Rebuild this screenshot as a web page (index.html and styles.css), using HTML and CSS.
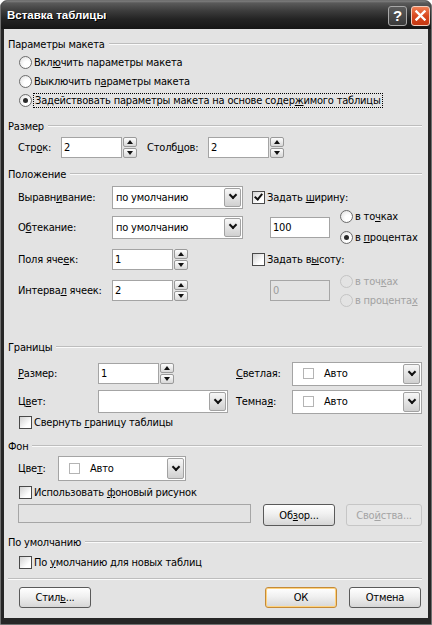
FILE: index.html
```html
<!DOCTYPE html>
<html lang="ru">
<head>
    <meta charset="UTF-8">
    <title>Вставка таблицы</title>
    <link rel="stylesheet" href="styles.css">
</head>
<body>
    <div class="window">
        <div class="titlebar">
            <span class="title">Вставка таблицы</span>
            <span class="cap-btn help">?</span>
            <span class="cap-btn close">
                <svg width="11" height="11" viewBox="0 0 11 11"><path d="M1.5 1.5l8 8M9.5 1.5l-8 8" stroke="#fff" stroke-width="2.4" stroke-linecap="square"/></svg>
            </span>
        </div>

        <div class="client">
            <!-- Параметры макета -->
            <div class="group-title first">Параметры макета</div>
            <div class="radio-list">
                <div class="opt"><span class="radio"></span><span>Вкл<u>ю</u>чить параметры макета</span></div>
                <div class="opt"><span class="radio"></span><span>Выключить п<u>а</u>раметры макета</span></div>
                <div class="opt"><span class="radio checked"></span><span class="focus">Задействовать параметры макета на основе содер<u>ж</u>имого таблицы</span></div>
            </div>

            <!-- Размер -->
            <div class="group-title">Размер</div>
            <div class="size-row">
                <span class="lbl-rows">Стр<u>о</u>к:</span>
                <span class="field w61">2</span>
                <span class="spin"><span class="spin-btn up"></span><span class="spin-btn down"></span></span>
                <span class="lbl-cols">Столб<u>ц</u>ов:</span>
                <span class="field w61">2</span>
                <span class="spin"><span class="spin-btn up"></span><span class="spin-btn down"></span></span>
            </div>

            <!-- Положение -->
            <div class="group-title">Положение</div>
            <div class="pos-grid">
                <span>Выравн<u>и</u>вание:</span>
                <span class="combo"><span class="combo-text">по умолчанию</span><span class="combo-btn"></span></span>
                <div class="opt side"><span class="check checked"></span><span>Задать <u>ш</u>ирину:</span></div>

                <span>О<u>б</u>текание:</span>
                <span class="combo"><span class="combo-text">по умолчанию</span><span class="combo-btn"></span></span>
                <div class="unit-row side">
                    <span class="field w60">100</span>
                    <div class="unit-stack">
                        <div class="opt"><span class="radio"></span><span>в то<u>ч</u>ках</span></div>
                        <div class="opt"><span class="radio checked"></span><span>в <u>п</u>роцентах</span></div>
                    </div>
                </div>

                <span>Поля яче<u>е</u>к:</span>
                <span class="spin-field"><span class="field w61">1</span><span class="spin"><span class="spin-btn up"></span><span class="spin-btn down"></span></span></span>
                <div class="opt side"><span class="check"></span><span>Задать в<u>ы</u>соту:</span></div>

                <span>Интерва<u>л</u> ячеек:</span>
                <span class="spin-field"><span class="field w61">2</span><span class="spin"><span class="spin-btn up"></span><span class="spin-btn down"></span></span></span>
                <div class="unit-row side">
                    <span class="field w60 disabled">0</span>
                    <div class="unit-stack tight">
                        <div class="opt disabled"><span class="radio"></span><span>в точ<u>к</u>ах</span></div>
                        <div class="opt disabled"><span class="radio"></span><span>в процента<u>х</u></span></div>
                    </div>
                </div>
            </div>

            <!-- Границы -->
            <div class="group-title borders-title">Границы</div>
            <div class="border-grid">
                <span><u>Р</u>азмер:</span>
                <span class="spin-field"><span class="field w61">1</span><span class="spin"><span class="spin-btn up"></span><span class="spin-btn down"></span></span></span>
                <span class="shade-lbl"><u>С</u>ветлая:</span>
                <span class="combo tall"><span class="combo-text"><span class="swatch"></span>Авто</span><span class="combo-btn"></span></span>

                <span>Ц<u>в</u>ет:</span>
                <span class="combo"><span class="combo-text"></span><span class="combo-btn"></span></span>
                <span class="shade-lbl">Темна<u>я</u>:</span>
                <span class="combo tall"><span class="combo-text"><span class="swatch"></span>Авто</span><span class="combo-btn"></span></span>
            </div>
            <div class="opt check-row"><span class="check"></span><span>Свернуть <u>г</u>раницу таблицы</span></div>

            <!-- Фон -->
            <div class="group-title">Фон</div>
            <div class="bg-row">
                <span>Цве<u>т</u>:</span>
                <span class="combo bg-combo"><span class="combo-text"><span class="swatch"></span>Авто</span><span class="combo-btn"></span></span>
            </div>
            <div class="opt check-row bg-check"><span class="check"></span><span>Использовать <u>ф</u>оновый рисунок</span></div>
            <div class="picture-row">
                <span class="field picture-path disabled"></span>
                <span class="btn browse">Об<u>з</u>ор...</span>
                <span class="btn props disabled">Сво<u>й</u>ства...</span>
            </div>

            <!-- По умолчанию -->
            <div class="group-title">По умолчанию</div>
            <div class="opt check-row default-check"><span class="check"></span><span>По <u>у</u>молчанию для новых таблиц</span></div>

            <div class="separator"></div>
            <div class="dialog-buttons">
                <span class="btn">Стил<u>ь</u>...</span>
                <span class="btn default">ОК</span>
                <span class="btn">Отмена</span>
            </div>
        </div>
    </div>
</body>
</html>
```

FILE: styles.css
```css
body {
    margin: 0;
    background: #ffffff;
    font-family: "DejaVu Sans Condensed", "DejaVu Sans", sans-serif;
    font-size: 11px;
    letter-spacing: -0.2px;
    color: #000;
}

u {
    text-decoration: underline;
    text-underline-offset: 1px;
}

.window {
    width: 432px;
    height: 625px;
    box-sizing: border-box;
    background: #262626;
    border: 1px solid #707070;
    border-radius: 7px 7px 0 0;
    display: flex;
    flex-direction: column;
}

/* caption */
.titlebar {
    height: 28px;
    display: flex;
    align-items: center;
    padding: 0 1px 0 6px;
    border-radius: 6px 6px 0 0;
    background: linear-gradient(#808080 0, #5a5a5a 2px, #3c3c3c 10px, #242424 18px, #161616 28px);
}

.title {
    flex: 1;
    color: #fff;
    font-family: "Liberation Sans", sans-serif;
    font-weight: bold;
    font-size: 11.5px;
    letter-spacing: 0;
    text-shadow: 1px 1px 0 #000;
}

.cap-btn {
    width: 17px;
    height: 18px;
    border: 1px solid #a8a8a8;
    border-radius: 3px;
    display: flex;
    align-items: center;
    justify-content: center;
    margin-top: 1px;
}

.help {
    background: linear-gradient(#5c5c5c, #3a3a3a);
    color: #fff;
    font-family: "Liberation Sans", sans-serif;
    font-weight: bold;
    font-size: 15px;
    margin-right: 4px;
}

.close {
    background: linear-gradient(#f08055, #d9481f 50%, #c53812);
    border-color: #f2d0c0;
}

/* dialog body */
.client {
    flex: 1;
    margin: 0 3px 6px;
    padding: 8px 6px 0 4px;
    background: #e3e3e3;
}

.group-title {
    height: 14px;
    display: flex;
    align-items: center;
    gap: 4px;
    margin-top: 9px;
}

.group-title.first {
    margin-top: 0;
}

.group-title::after {
    content: "";
    flex: 1;
    height: 0;
    border-top: 1px solid #bdbdbd;
    border-bottom: 1px solid #fafafa;
}

.opt {
    display: flex;
    align-items: center;
    gap: 2px;
    white-space: nowrap;
}

.opt.disabled {
    color: #a2a2a2;
}

.radio-list {
    margin: 2px 0 0 11px;
}

.radio-list .opt {
    height: 19px;
}

.radio {
    width: 11px;
    height: 11px;
    border: 1px solid #6c6c6c;
    border-radius: 50%;
    background: radial-gradient(circle at 65% 65%, #ffffff 30%, #dcdcdc 100%);
    display: flex;
    align-items: center;
    justify-content: center;
    flex: none;
}

.radio.checked::after {
    content: "";
    width: 5px;
    height: 5px;
    border-radius: 50%;
    background: #2a2a2a;
}

.opt.disabled .radio {
    border-color: #c4c4c4;
    background: #e3e3e3;
}

.check {
    width: 11px;
    height: 11px;
    border: 1px solid #4a4a4a;
    background: linear-gradient(135deg, #d2d2d2, #ffffff 70%);
    flex: none;
    display: flex;
    align-items: center;
    justify-content: center;
}

.check.checked::after {
    content: "";
    width: 3px;
    height: 6px;
    border: solid #111;
    border-width: 0 2px 2px 0;
    transform: translateY(-1px) rotate(40deg);
}

.focus {
    outline: 1px dotted #000;
    outline-offset: 0;
    padding: 0 1px;
}

/* text fields */
.field {
    height: 19px;
    box-sizing: border-box;
    border: 1px solid #a4a4a4;
    background: #fff;
    padding: 0 2px;
    display: flex;
    align-items: center;
    flex: none;
}

.field.disabled {
    background: #e3e3e3;
    color: #9c9c9c;
    border-color: #a6a6a6;
}

.w60 { width: 60px; height: 21px; }
.w61 { width: 61px; height: 21px; }

.spin {
    width: 14px;
    height: 21px;
    display: flex;
    flex-direction: column;
    justify-content: space-between;
    margin-left: 1px;
    flex: none;
}

.spin-btn {
    height: 10px;
    box-sizing: border-box;
    border: 1px solid #9a9a9a;
    border-radius: 2px;
    background: linear-gradient(#fdfdfd, #d8d8d8);
    display: flex;
    align-items: center;
    justify-content: center;
}

.spin-btn::after {
    content: "";
    border-left: 3.5px solid transparent;
    border-right: 3.5px solid transparent;
}

.spin-btn.up::after {
    border-bottom: 4px solid #111;
}

.spin-btn.down::after {
    border-top: 4px solid #111;
}

.spin-field {
    display: flex;
    align-items: center;
}

.size-row {
    height: 21px;
    display: flex;
    align-items: center;
    margin: 4px 0 0 10px;
}

.lbl-rows { width: 43px; }
.lbl-cols { margin-left: 10px; width: 61px; }

/* combo boxes */
.combo {
    height: 23px;
    box-sizing: border-box;
    border: 1px solid #a4a4a4;
    background: #fff;
    display: flex;
    align-items: stretch;
    padding: 1px;
}

.combo.tall {
    height: 24px;
}

.combo-text {
    flex: 1;
    display: flex;
    align-items: center;
    padding-left: 2px;
}

.combo-btn {
    width: 15px;
    border: 1px solid #a2a2a2;
    border-radius: 2px;
    background: linear-gradient(#f7f7f7, #d0d0d0);
    display: flex;
    align-items: center;
    justify-content: center;
}

.combo-btn::after {
    content: "";
    width: 4px;
    height: 4px;
    border: solid #111;
    border-width: 0 2px 2px 0;
    transform: translateY(-2px) rotate(45deg);
}

.swatch {
    width: 9px;
    height: 9px;
    border: 1px solid #b4b4b4;
    background: #fff;
    margin: 0 10px 0 7px;
}

.pos-grid {
    display: grid;
    grid-template-columns: 94px 131px 1fr;
    grid-template-rows: 30px 30px 35px 27px;
    align-items: center;
    margin: 1px 0 0 10px;
}

.pos-grid .side {
    margin-left: 9px;
}

.unit-row {
    display: flex;
    align-items: center;
    padding-left: 18px;
}

.unit-stack {
    margin-left: 10px;
}

.unit-stack .opt {
    height: 21px;
}

.unit-stack.tight .opt {
    height: 19px;
}

.borders-title {
    margin-top: 36px;
}

.border-grid {
    display: grid;
    grid-template-columns: 80px 130px 64px 130px;
    grid-template-rows: 31px 25px;
    align-items: center;
    margin: 4px 0 0 10px;
}

.shade-lbl {
    margin-left: 8px;
}

.check-row {
    height: 16px;
    margin-left: 11px;
}

.bg-row {
    height: 25px;
    display: flex;
    align-items: center;
    margin: 3px 0 0 10px;
}

.bg-row > span:first-child {
    width: 40px;
}

.bg-combo {
    width: 128px;
    height: 25px;
}

.bg-check {
    margin-top: 3px;
}

.picture-row {
    display: flex;
    align-items: flex-start;
    margin: 4px 0 0 10px;
    height: 22px;
}

.picture-path {
    width: 233px;
    height: 19px;
}

/* push buttons */
.btn {
    width: 72px;
    height: 21px;
    box-sizing: border-box;
    border: 1px solid #5a5a5a;
    border-radius: 3px;
    background: linear-gradient(#ffffff, #f0f0f0 45%, #d6d6d6);
    display: flex;
    align-items: center;
    justify-content: center;
    flex: none;
}

.btn.browse {
    margin-left: 12px;
    height: 22px;
}

.btn.props {
    width: 76px;
    margin-left: 11px;
    height: 22px;
}

.btn.disabled {
    border-color: #c6c6c6;
    color: #a4a4a4;
    background: #e6e6e6;
}

.btn.default {
    border-color: #c48a38;
    box-shadow: inset 0 0 0 1px #ffd27c;
    margin-left: auto;
    margin-right: 12px;
}

.default-check {
    margin-top: 5px;
}

.separator {
    margin-top: 8px;
    border-top: 1px solid #bdbdbd;
    border-bottom: 1px solid #fafafa;
}

.dialog-buttons {
    display: flex;
    margin: 7px 1px 0 11px;
}
```
